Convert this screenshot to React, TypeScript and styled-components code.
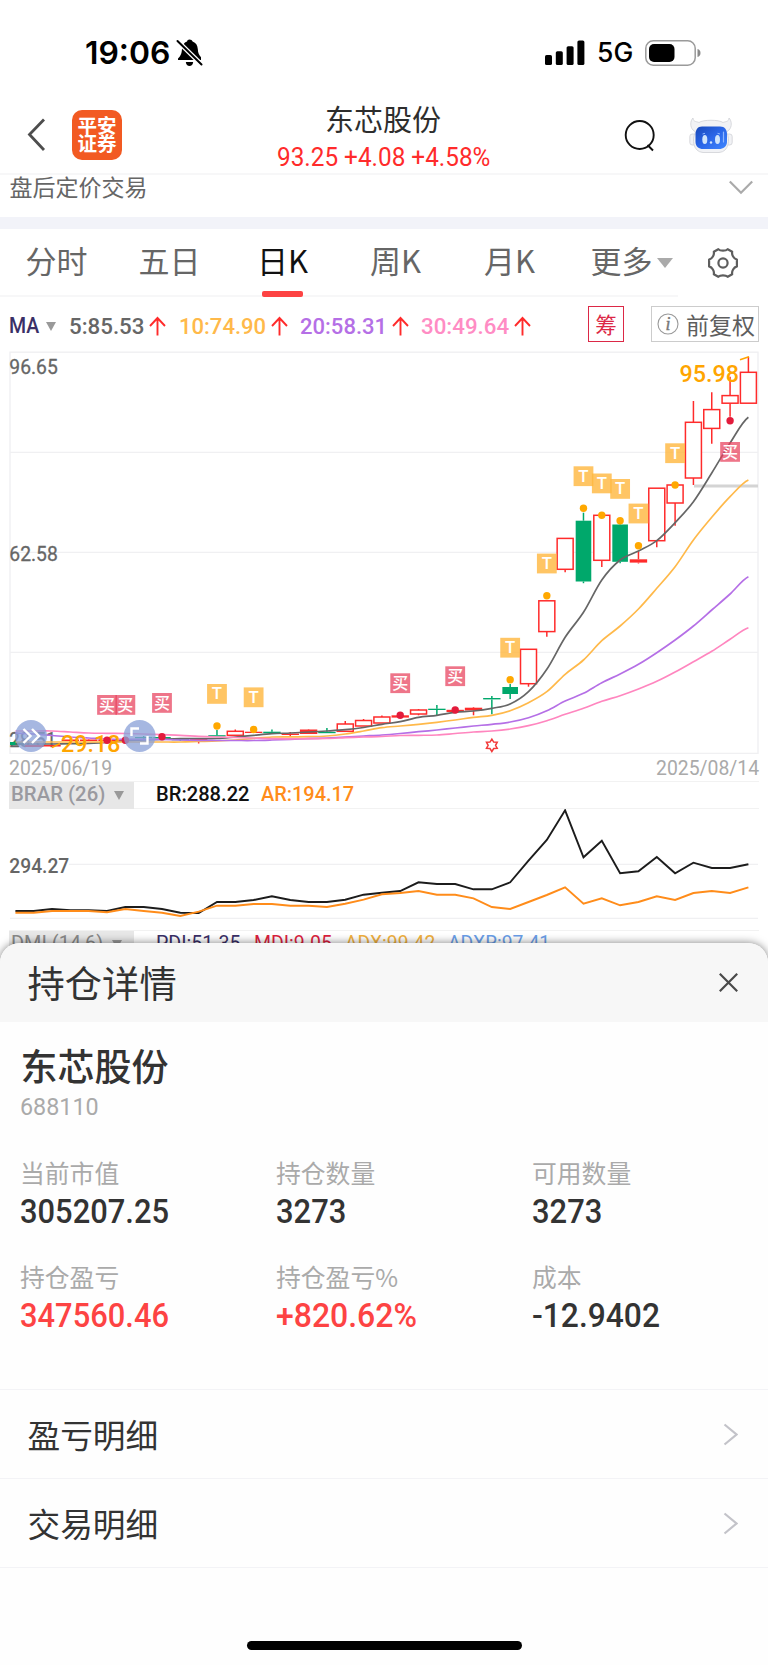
import React, { useLayoutEffect, useRef, useState } from "react";
import styled, { createGlobalStyle } from "styled-components";

const CJK = `"Noto Sans CJK SC", "Noto Sans", sans-serif`;
const DIN = `Roboto, "Noto Sans CJK SC", sans-serif`;

const Global = createGlobalStyle`
  * { box-sizing: border-box; }
  body { margin: 0; background: #fff; font-family: ${CJK}; }
  svg { display: block; flex: none; }
`;

/* ---------- narrow figures, squeezed to the width of their slot ---------- */
const FitSlot = styled.span<{ $w: number; $size: number; $weight?: number; $color?: string; $font?: string }>`
  display: block;
  flex: none;
  width: ${(p) => p.$w}px;
  font-family: ${(p) => p.$font ?? DIN};
  font-size: ${(p) => p.$size}px;
  font-weight: ${(p) => p.$weight ?? 400};
  color: ${(p) => p.$color ?? "inherit"};
  line-height: 1.2;
  white-space: nowrap;
`;
const FitText = styled.span`
  display: inline-block;
  transform-origin: 0 50%;
`;

type FitProps = { w: number; size: number; weight?: number; color?: string; font?: string; children: string };

function Fit({ w, size, weight, color, font, children }: FitProps) {
  const ref = useRef<HTMLSpanElement>(null);
  const [scale, setScale] = useState(1);
  useLayoutEffect(() => {
    if (ref.current) setScale(w / ref.current.offsetWidth);
  }, [w, children]);
  return (
    <FitSlot $w={w} $size={size} $weight={weight} $color={color} $font={font}>
      <FitText ref={ref} style={{ transform: `scaleX(${scale})` }}>{children}</FitText>
    </FitSlot>
  );
}

/* ---------- page ---------- */
const Screen = styled.div`
  width: 768px;
  height: 1665px;
  background: #fff;
  display: flex;
  flex-direction: column;
  overflow: hidden;
`;
const Quote = styled.div`
  height: 963px;
  flex: none;
  overflow: hidden;
`;

const StatusBar = styled.div`
  height: 96px;
  padding: 10px 66px 0 85px;
  display: flex;
  align-items: center;
  justify-content: space-between;
`;
const StatusGroup = styled.div`
  display: flex;
  align-items: center;
`;
const Gap = styled.span<{ $w: number }>`
  width: ${(p) => p.$w}px;
  flex: none;
`;

const Header = styled.header`
  height: 79px;
  border-bottom: 2px solid #f7f7f8;
  display: grid;
  grid-template-columns: 277px 212px 1fr;
`;
const HeaderLeft = styled.div`
  display: flex;
  align-items: flex-start;
  padding: 14px 0 0 27px;
  gap: 26px;
`;
const HeaderRight = styled.div`
  display: flex;
  align-items: flex-start;
  padding: 20px 0 0 135px;
  gap: 31px;
`;
const BackIcon = styled.svg`
  margin-top: 8px;
`;
const Logo = styled.div`
  width: 50px;
  height: 50px;
  border-radius: 10px;
  background: #f25a22;
  color: #fff;
  font-size: 19.5px;
  font-weight: 700;
  line-height: 18.5px;
  text-align: center;
  padding-top: 5.5px;
`;
const HeaderCenter = styled.div`
  display: flex;
  flex-direction: column;
  align-items: center;
`;
const StockTitle = styled.div`
  font-size: 29px;
  line-height: 44px;
  height: 47px;
  color: #2d2d2d;
`;

const AfterHours = styled.div`
  height: 42px;
  display: flex;
  align-items: flex-start;
  justify-content: space-between;
  padding: 0 15px 0 9.5px;
  font-size: 23px;
  line-height: 22px;
  color: #666;
`;
const DownIcon = styled.svg`
  margin-top: 5px;
`;
const Band = styled.div`
  height: 12px;
  background: #f2f3f9;
`;

const Tabs = styled.nav`
  height: 68px;
  display: flex;
  width: 678px;
  border-bottom: 2px solid #f7f7f8;
`;
const TabsRow = styled.div`
  display: flex;
  align-items: flex-start;
`;
const Tab = styled.div<{ $w: number; $active?: boolean; $shift?: number }>`
  width: ${(p) => p.$w}px;
  height: 68px;
  flex: none;
  display: flex;
  flex-direction: column;
  align-items: center;
  justify-content: space-between;
  padding-left: ${(p) => p.$shift ?? 0}px;
  font-size: 31px;
  line-height: 66px;
  color: ${(p) => (p.$active ? "#111" : "#666")};
`;
const TabLabel = styled.div`
  height: 62px;
  display: flex;
  align-items: center;
  gap: 4px;
  white-space: nowrap;
  svg { margin-top: 5px; }
`;
const Underline = styled.div`
  width: 41px;
  height: 6px;
  border-radius: 2px;
  background: #fd4343;
`;
const GearWrap = styled.div`
  padding: 18px 0 0 28px;
`;

const MaRow = styled.div`
  height: 54px;
  display: flex;
  align-items: center;
  padding: 0 9px;
`;
const Readouts = styled.div`
  display: flex;
  align-items: center;
  padding-top: 4px;
`;
const ChipButton = styled.div`
  width: 36px;
  height: 36px;
  border: 1.5px solid #dc2846;
  color: #dc2846;
  font-size: 21.5px;
  line-height: 34px;
  text-align: center;
`;
const AdjustButton = styled.div`
  width: 108px;
  height: 36px;
  border: 1.5px solid #ccc;
  display: flex;
  align-items: center;
  color: #5e5e5e;
  font-size: 23px;
  line-height: 34px;
  padding-left: 5px;
  gap: 7px;
  white-space: nowrap;
`;
const DateRow = styled.div`
  height: 27px;
  display: flex;
  justify-content: space-between;
  align-items: center;
  padding: 2px 9px 0;
`;
const IndicatorBar = styled.div`
  height: 28px;
  margin: 0 9px;
  border-top: 1.5px solid #f2f2f2;
  border-bottom: 1.5px solid #f2f2f2;
  display: flex;
  align-items: center;
`;
const IndicatorName = styled.div`
  width: 125px;
  height: 27px;
  flex: none;
  background: #e7e7e7;
  padding-left: 2px;
  display: flex;
  align-items: center;
  gap: 9px;
  margin-right: 22px;
`;

/* ---------- position sheet ---------- */
const Sheet = styled.section`
  position: relative;
  flex: 1;
  margin-top: -20px;
  border-radius: 20px 20px 0 0;
  background: #fefefe;
  box-shadow: 0 0 9px rgba(0, 0, 0, 0.5);
  display: flex;
  flex-direction: column;
`;
const SheetHeader = styled.div`
  height: 78.5px;
  flex: none;
  border-radius: 20px 20px 0 0;
  background: #f7f7f7;
  display: flex;
  align-items: center;
  justify-content: space-between;
  padding: 0 30px 0 27.5px;
  font-size: 37.3px;
  line-height: 76px;
  color: #333;
`;
const Holding = styled.div`
  height: 367.5px;
  padding: 18px 20px 0;
`;
const HoldingName = styled.div`
  font-size: 37px;
  font-weight: 500;
  line-height: 51px;
  height: 52px;
  padding-left: 0.5px;
  color: #333;
`;
const HoldingCode = styled.div`
  height: 64px;
`;
const Stats = styled.div`
  display: grid;
  grid-template-columns: 256px 256px 1fr;
  grid-auto-rows: 104px;
`;
const StatLabel = styled.div`
  font-size: 24.8px;
  line-height: 32px;
  color: #aaa;
  margin-bottom: 3px;
`;
const LinkRow = styled.div`
  height: 89px;
  flex: none;
  border-top: 1px solid #f3f3f6;
  display: flex;
  align-items: center;
  justify-content: space-between;
  padding: 0 30px 0 27.5px;
  font-size: 32.7px;
  line-height: 84px;
  color: #333;
`;
const SheetFoot = styled.div`
  flex: 1;
  border-top: 1px solid #f3f3f6;
  display: flex;
  justify-content: center;
  align-items: flex-end;
  padding-bottom: 15px;
`;
const HomeBar = styled.div`
  width: 275px;
  height: 9px;
  border-radius: 4.5px;
  background: #000;
`;

/* ---------- icons ---------- */
const Triangle = ({ w = 10, h = 9, color = "#999" }) => (
  <svg width={w} height={h} viewBox="0 0 10 9" preserveAspectRatio="none">
    <path d="M0 0H10L5 9Z" fill={color} />
  </svg>
);
const UpArrow = () => (
  <svg width="17" height="20" viewBox="0 0 17 20" fill="none" stroke="#ff2b2b" strokeWidth="1.9">
    <path d="M8.5 19.5V2M1 10L8.5 2L16 10" />
  </svg>
);
const BellOff = () => (
  <svg width="27" height="28" viewBox="0 0 27 28">
    <path d="M13.5 .5C15 .5 16.2 1.3 16.6 2.5C20 3.6 21.5 6.5 21.8 10C22 14 23 16 25 18.2V21H2V19.5C5 16.5 5.6 14.5 6 10C6.3 6.5 8 3.5 11 2.5C11.200 1.300 12.200 .5 13.500 .5Z" />
    <path d="M9.800 23H17.200C16.900 25.500 15.500 27 13.500 27S10.100 25.500 9.800 23Z" />
    <path d="M1 1.500L26.500 26.500" stroke="#fff" strokeWidth="4.600" />
    <path d="M1.500 2L25.500 25.500" stroke="#000" strokeWidth="2" strokeLinecap="round" />
  </svg>
);
const Signal = () => (
  <svg width="40" height="26" viewBox="0 0 40 26">
    <rect x="0" y="15" width="7" height="10" rx="1.600" />
    <rect x="10.800" y="11.200" width="7" height="13.800" rx="1.600" />
    <rect x="21.600" y="6.200" width="7" height="18.800" rx="1.600" />
    <rect x="32.400" y=".5" width="7" height="24.500" rx="1.600" />
  </svg>
);
const Battery = () => (
  <svg width="57" height="26" viewBox="0 0 57 26">
    <rect x=".8" y=".8" width="49.400" height="24.400" rx="7.500" fill="none" stroke="#9a9a9a" strokeWidth="1.500" />
    <rect x="4" y="4" width="25.500" height="18" rx="5" />
    <path d="M52.500 9C54.500 9.600 55.500 11 55.500 13S54.500 16.400 52.500 17Z" fill="#8a8a8a" />
  </svg>
);
const Robot = () => (
  <svg width="44" height="38" viewBox="0 0 44 36">
    <defs>
      <linearGradient id="visor" x1="0" y1="0" x2="1" y2="1">
        <stop offset="0" stopColor="#1848b8" />
        <stop offset=".5" stopColor="#2a66e8" />
        <stop offset="1" stopColor="#3f86ff" />
      </linearGradient>
    </defs>
    <g fill="#f1f2f5" stroke="#cfd0d6" strokeWidth=".8">
      <rect x=".8" y="17" width="6" height="11" rx="2.500" />
      <rect x="37.200" y="17" width="6" height="11" rx="2.500" />
      <path d="M4 1C1 4 1 10 4 13L6.500 15C2.500 22 4 35 14 35.500H30C40 35 41.500 22 37.500 15L40 13C43 10 43 4 40 1C40 5 36 4.500 34 5.500C30 2.500 14 2.500 10 5.500C8 4.500 4 5 4 1Z" />
    </g>
    <path d="M13 9.500H31C36 9.500 38 13 38 17.500V25C38 29.500 34 32 30 32H14C10 32 6.500 29.500 6.500 25V17.500C6.500 13 8.500 9.500 13 9.500Z" fill="url(#visor)" />
    <ellipse cx="15.800" cy="22.500" rx="2.500" ry="4.500" fill="#cfe4fb" />
    <ellipse cx="28.500" cy="22.500" rx="2.500" ry="4.500" fill="#cfe4fb" />
    <path d="M13.500 17L16 16.300M28.500 16.300L31 17" stroke="#8fb8ff" strokeWidth="1" />
    <circle cx="22" cy="25.500" r="1.200" fill="#cfe4fb" />
    <path d="M34.500 15V25" stroke="#8eb6ff" strokeWidth="1.200" strokeLinecap="round" />
  </svg>
);
const Gear = () => (
  <svg width="32" height="32" viewBox="0 0 32 32" fill="none" stroke="#5e5e5e" strokeWidth="2.200" strokeLinejoin="round">
    <path d="M11.300 2.200C13.300 4.200 18.700 4.200 20.700 2.200L25.200 4.800C24.500 7.800 26.700 11.600 29.900 12.600V19.400C26.700 20.400 24.500 24.200 25.200 27.200L20.700 29.800C18.700 27.800 13.300 27.800 11.300 29.800L6.800 27.200C7.500 24.200 5.300 20.400 2.100 19.400V12.600C5.300 11.600 7.500 7.800 6.800 4.800Z" />
    <circle cx="16" cy="16" r="4.600" />
  </svg>
);
const Info = () => (
  <svg width="22" height="22" viewBox="0 0 22 22">
    <circle cx="11" cy="11" r="10" fill="none" stroke="#999" strokeWidth="1.100" />
    <text x="11" y="17" textAnchor="middle" fontFamily="Liberation Serif, serif" fontStyle="italic" fontSize="18" fill="#777" stroke="#777" strokeWidth=".4">i</text>
  </svg>
);
const RightChevron = () => (
  <svg width="15" height="23" viewBox="0 0 15 23" fill="none" stroke="#c3c3c9" strokeWidth="2.200">
    <path d="M1.500 1.500L13.500 11.500L1.500 21.500" />
  </svg>
);

/* ---------- chart data ---------- */
const px = (i: number) => 15.4 + 18.325 * i;
type Kind = "up" | "down" | "flat";
/* index, kind, body top, body bottom, high, low */
const candles: [number, Kind, number, number, number, number][] = [
  [0, "down", 742, 745, 741, 745], [1, "flat", 745, 747, 745, 747], [2, "flat", 745, 746.5, 745, 746.5],
  [3, "flat", 739.5, 741, 739, 741], [4, "flat", 739.5, 741, 739, 741], [5, "flat", 739.5, 741, 738, 742],
  [6, "flat", 739.5, 741, 738, 742], [7, "down", 737, 738.3, 736, 739], [8, "down", 737, 738.3, 735, 739],
  [9, "down", 739, 740.3, 738, 741],
  [10, "flat", 738.3, 742, 738, 743.5], [11, "down", 735.2, 736.5, 730, 736.5], [12, "up", 731.3, 735.3, 729.5, 735.3],
  [13, "flat", 731.7, 733, 731, 733], [14, "down", 731.7, 733.2, 729.5, 733.2], [15, "flat", 733.5, 735, 732, 736.5],
  [16, "flat", 729.5, 734, 729, 734], [17, "down", 731.8, 733.2, 728, 733.2], [18, "up", 724, 731.3, 721, 731.3],
  [19, "up", 720.5, 726, 719, 726], [20, "up", 717, 723, 715.5, 723], [21, "flat", 715.3, 717.6, 714, 717.6],
  [22, "up", 710, 714, 709, 715.3], [23, "down", 708.7, 710, 705, 715], [24, "flat", 709.8, 712, 709, 712],
  [25, "flat", 707.7, 710.5, 707, 715.3], [26, "down", 698, 699.4, 696, 714.3], [27, "down", 687, 694, 684, 699],
  [28, "up", 649.3, 683.7, 649.3, 686.7], [29, "up", 600.8, 631.6, 600.8, 636.7], [30, "up", 538.4, 569.3, 538.4, 572.3],
  [31, "down", 520.7, 581.5, 512.7, 583.2], [32, "up", 515.3, 560.3, 515.3, 567], [33, "down", 524.5, 561.8, 522, 563.2],
  [34, "flat", 559.3, 562.6, 551.3, 563.5], [35, "up", 488.2, 540.7, 488.2, 547.3], [36, "up", 485, 503, 485, 525.7],
  [37, "up", 422.3, 478, 401, 485], [38, "up", 409.6, 428.4, 392.3, 443.7], [39, "up", 395.6, 403.2, 376.7, 416.7],
  [40, "up", 372.3, 403.2, 356.7, 403.2],
];
const trades: [number, "T" | "买", number][] = [
  [5, "买", 695], [6, "买", 695], [8, "买", 693], [11, "T", 684], [13, "T", 687.4], [21, "买", 673.3], [24, "买", 666.3],
  [27, "T", 637.8], [29, "T", 553.6], [31, "T", 466.3], [32, "T", 473.5], [33, "T", 479], [34, "T", 503.6], [36, "T", 443.3], [39, "买", 442],
];
const sellDots: [number, number][] = [
  [11, 726], [13, 729.5], [27, 679.7], [29, 595.7], [31, 508.3], [32, 515.3], [33, 520.7], [34, 545.7], [36, 485],
];
const buyDots: [number, number][] = [[5, 740.3], [6, 740.3], [8, 736.7], [21, 715.3], [24, 710], [39, 420.7]];
const maLines: { color: string; pts: number[] }[] = [
  { color: "#666", pts: [744, 744, 744, 743.7, 743.3, 742.5, 741, 740, 739.3, 738.7, 738.5, 738.5, 737, 735.3, 733.7, 733, 732, 731, 729.7, 727.5, 724.3, 721.7, 717.3, 715.3, 712.3, 711, 708.3, 704, 691.7, 669.3, 637.3, 612.3, 580, 560, 551, 540.7, 522.7, 501.7, 473, 443, 417.3] },
  { color: "#ffb94a", pts: [742, 742, 742, 742, 742, 742, 742, 742, 742, 742, 741.5, 741, 740, 738.5, 737, 736.8, 736.7, 736, 734, 731, 727.7, 726, 724.3, 722.3, 720, 717.3, 715.3, 710.7, 702.7, 691.7, 674.3, 660, 640.7, 626, 609, 588.3, 566.7, 540, 517.3, 496.7, 480] },
  { color: "#b56fe6", pts: [733, 734, 735.5, 737, 738, 739, 739.3, 739.3, 739.5, 740, 740.3, 740.5, 740.5, 740.5, 740, 739.3, 738.7, 738, 737, 736, 735, 733.5, 731.7, 730, 728, 726, 724.3, 722, 717.7, 710.7, 701, 693.3, 682.7, 674, 664.3, 652.7, 640, 626, 610, 594, 576.7] },
  { color: "#ff86bf", pts: [731, 731, 731, 732, 733, 733.3, 733.5, 734, 734.7, 735.3, 736.3, 737, 737.5, 738, 738.7, 738.8, 738.7, 738.5, 737.7, 737, 736.5, 735.5, 735.3, 735, 733.5, 732, 731, 729, 725.7, 720.7, 714.3, 708.3, 701.3, 695.7, 689, 681.3, 672, 661.7, 651.3, 639.3, 627.7] },
];
const br = [911, 911, 909, 910.3, 910.3, 911, 907, 907, 909, 912.7, 913, 902, 902, 900, 896.3, 900, 902, 902, 899.7, 894.7, 892.8, 891, 882.3, 884, 884, 889.3, 889.3, 882.3, 860.7, 840, 810.3, 857.3, 840.7, 873.3, 871.3, 857, 873.3, 862.7, 868, 868, 864.3];
const ar = [912.7, 912.7, 911, 911, 911, 912.3, 909, 911, 912.7, 916, 911.7, 905.7, 905.7, 904, 904, 905.7, 905.7, 907, 903.7, 899.7, 894.3, 893, 891, 894.7, 894.7, 898.3, 907, 909, 902, 895, 887.3, 903.7, 898.3, 905.3, 902, 896.3, 900, 893, 891, 893, 887.3];

const polyline = (v: number[]) => v.map((y, i) => `${px(i).toFixed(1)},${y}`).join(" ");
const smooth = (v: number[]) =>
  v.reduce((d, y, i) => {
    if (i === 0) return `M${px(0)} ${y}`;
    const slope = (k: number) => (v[Math.min(k + 1, v.length - 1)] - v[Math.max(k - 1, 0)]) / 6;
    return `${d}C${px(i - 1) + 6.1} ${v[i - 1] + slope(i - 1)} ${px(i) - 6.1} ${y - slope(i)} ${px(i)} ${y}`;
  }, "");

function Candle({ i, kind, top, bottom, high, low }: { i: number; kind: Kind; top: number; bottom: number; high: number; low: number }) {
  const x = px(i);
  const color = kind === "down" ? "#00a86b" : "#ff2b2b";
  const w = kind === "up" ? 16 : kind === "down" && bottom - top > 4 ? 15.6 : 17.4;
  const left = Math.max(x - w / 2, 10);
  const width = x + w / 2 - left;
  return (
    <g stroke={color} strokeWidth="1.5">
      {high < top && <path d={`M${x} ${high}V${top}`} />}
      {low > bottom && <path d={`M${x} ${bottom}V${low}`} />}
      {kind === "up" ? (
        <rect x={left} y={top} width={width} height={bottom - top} fill="#fff" />
      ) : (
        <rect x={left} y={top} width={width} height={bottom - top} fill={color} stroke="none" />
      )}
    </g>
  );
}

const starPoints = Array.from({ length: 12 }, (_, k) => {
  const a = (Math.PI / 6) * k - Math.PI / 2;
  const r = k % 2 ? 3.7 : 6.2;
  return `${(px(26) + r * Math.cos(a)).toFixed(2)},${(745.3 + r * Math.sin(a)).toFixed(2)}`;
}).join(" ");

function KLineChart() {
  return (
    <svg width="768" height="403" viewBox="0 351 768 403" fontFamily="Roboto, sans-serif">
      <g stroke="#f0f0f2" strokeWidth="1.4" fill="none">
        <rect x="10" y="352.2" width="748" height="401.200" />
        <path d="M10 452.400H758M10 552.400H758M10 652.400H758" />
      </g>
      <g fontSize="20.500" fill="#666" stroke="#666" strokeWidth=".3">
        <text x="9.300" y="374.300" textLength="48.500" lengthAdjust="spacingAndGlyphs">96.65</text>
        <text x="9.300" y="560.800" textLength="48.500" lengthAdjust="spacingAndGlyphs">62.58</text>
        <text x="9.300" y="747" textLength="47" lengthAdjust="spacingAndGlyphs">28.51</text>
      </g>
      {candles.map(([i, kind, top, bottom, high, low]) => (
        <Candle key={i} i={i} kind={kind} top={top} bottom={bottom} high={high} low={low} />
      ))}
      <path d="M694 486H758" stroke="#d4d4d4" strokeWidth="3.200" />
      {maLines.map((m) => (
        <path key={m.color} d={smooth(m.pts)} fill="none" stroke={m.color} strokeWidth="1.700" />
      ))}
      <path d="M740 359.700L749 356.700M52 747.500L60 743.500" stroke="#ffa500" strokeWidth="1.600" />
      <g fontSize="24.500" fill="#ffa500" fontWeight="500">
        <text x="679.500" y="382" textLength="59.500" lengthAdjust="spacingAndGlyphs">95.98</text>
        <text x="61" y="752" textLength="59.500" lengthAdjust="spacingAndGlyphs">29.18</text>
      </g>
      {sellDots.map(([i, y]) => <circle key={i} cx={px(i)} cy={y} r="3.700" fill="#ffa800" />)}
      {buyDots.map(([i, y]) => <circle key={i} cx={px(i)} cy={y} r="3.700" fill="#e31b3c" />)}
      {trades.map(([i, side, y]) => (
        <g key={i}>
          <rect x={px(i) - 9.900} y={y} width="19.800" height="19.800" fill={side === "T" ? "#ffb73d" : "#e8405c"} fillOpacity={side === "T" ? 0.8 : 0.72} />
          {side === "T" ? (
            <text x={px(i)} y={y + 15.200} textAnchor="middle" fontSize="16.800" fontWeight="500" fill="#fff">T</text>
          ) : (
            <text x={px(i)} y={y + 15.800} textAnchor="middle" fontSize="16" fontWeight="500" fontFamily="Noto Sans CJK SC, sans-serif" fill="#fff">买</text>
          )}
        </g>
      ))}
      <polygon points={starPoints} fill="none" stroke="#f23a3a" strokeWidth="1.500" />
      <g fill="#8aa0d8" fillOpacity=".76">
        <circle cx="31" cy="736" r="16" />
        <circle cx="139.600" cy="736" r="16" />
      </g>
      <g fill="none" stroke="#fff" strokeWidth="2.400">
        <path d="M23.500 729L30.500 736L23.500 743M32 729L39 736L32 743" />
        <path d="M131.500 736V728.500H139M140 743.500H147.500V736" />
      </g>
    </svg>
  );
}

function BrarChart() {
  return (
    <svg width="768" height="121" viewBox="0 809 768 121" fontFamily="Roboto, sans-serif">
      <path d="M10 864.400H758M10 918.400H758" stroke="#f0f0f2" strokeWidth="1.400" />
      <rect x="8" y="855" width="61" height="20" fill="#fff" />
      <text x="9.300" y="873.200" fontSize="21" fontWeight="500" fill="#666" textLength="60" lengthAdjust="spacingAndGlyphs">294.27</text>
      <polyline points={polyline(br)} fill="none" stroke="#1c1c1c" strokeWidth="1.900" />
      <polyline points={polyline(ar)} fill="none" stroke="#ff8c1a" strokeWidth="1.900" />
    </svg>
  );
}

const averages = [
  { text: "5:85.53", w: 75, color: "#666", after: 13 },
  { text: "10:74.90", w: 87, color: "#ffb94a", after: 12 },
  { text: "20:58.31", w: 87, color: "#b56fe6", after: 12 },
  { text: "30:49.64", w: 88, color: "#ff8cc4", after: 57 },
];
const stats = [
  { label: "当前市值", value: "305207.25", w: 149 },
  { label: "持仓数量", value: "3273", w: 70 },
  { label: "可用数量", value: "3273", w: 70 },
  { label: "持仓盈亏", value: "347560.46", w: 149, red: true },
  { label: "持仓盈亏%", value: "+820.62%", w: 141, red: true },
  { label: "成本", value: "-12.9402", w: 128 },
];

export default function App() {
  return (
    <Screen>
      <Global />
      <Quote>
        <StatusBar>
          <StatusGroup>
            <Fit w={85} size={31.500} weight={600} color="#000" font="Inter, sans-serif">19:06</Fit>
            <Gap $w={6} />
            <BellOff />
          </StatusGroup>
          <StatusGroup>
            <Signal />
            <Gap $w={12} />
            <Fit w={36} size={26.500} weight={500} color="#000" font="Inter, sans-serif">5G</Fit>
            <Gap $w={12} />
            <Battery />
          </StatusGroup>
        </StatusBar>

        <Header>
          <HeaderLeft>
            <BackIcon width="19" height="34" viewBox="0 0 19 34" fill="none" stroke="#4d4d4d" strokeWidth="2.800">
              <path d="M17 1.500L2.500 16.500L17 32" />
            </BackIcon>
            <Logo>平安<br />证券</Logo>
          </HeaderLeft>
          <HeaderCenter>
            <StockTitle>东芯股份</StockTitle>
            <Fit w={213} size={25} color="#ff2b2b">93.25 +4.08 +4.58%</Fit>
          </HeaderCenter>
          <HeaderRight>
            <svg width="34" height="36" viewBox="0 0 34 36" fill="none" stroke="#111" strokeWidth="1.900">
              <circle cx="15.700" cy="19" r="14" />
              <path d="M23.500 29L29 34.500" />
            </svg>
            <Robot />
          </HeaderRight>
        </Header>

        <AfterHours>
          盘后定价交易
          <DownIcon width="24" height="15" viewBox="0 0 24 15" fill="none" stroke="#aaa" strokeWidth="2.200">
            <path d="M.8 1.500L12 12.700L23.200 1.500" />
          </DownIcon>
        </AfterHours>
        <Band />

        <Tabs>
          <TabsRow>
            <Tab $w={113}><TabLabel>分时</TabLabel></Tab>
            <Tab $w={113}><TabLabel>五日</TabLabel></Tab>
            <Tab $w={113} $active><TabLabel>日K</TabLabel><Underline /></Tab>
            <Tab $w={113}><TabLabel>周K</TabLabel></Tab>
            <Tab $w={115}><TabLabel>月K</TabLabel></Tab>
            <Tab $w={112} $shift={17}><TabLabel>更多<Triangle w={16} h={10} color="#aaa" /></TabLabel></Tab>
            <GearWrap><Gear /></GearWrap>
          </TabsRow>
        </Tabs>

        <MaRow>
          <Readouts>
            <Fit w={30} size={21.500} weight={500} color="#3a2f66">MA</Fit>
            <Gap $w={7} />
            <Triangle />
            <Gap $w={13} />
            {averages.map((m) => (
              <React.Fragment key={m.text}>
                <Fit w={m.w} size={22.300} weight={500} color={m.color}>{m.text}</Fit>
                <Gap $w={5} />
                <UpArrow />
                <Gap $w={m.after} />
              </React.Fragment>
            ))}
          </Readouts>
          <ChipButton>筹</ChipButton>
          <Gap $w={27} />
          <AdjustButton><Info />前复权</AdjustButton>
        </MaRow>

        <KLineChart />
        <DateRow>
          <Fit w={103} size={20.500} color="#aaa">2025/06/19</Fit>
          <Fit w={103} size={20.500} color="#aaa">2025/08/14</Fit>
        </DateRow>
        <IndicatorBar>
          <IndicatorName><Fit w={94} size={21} weight={500} color="#9a9aa0">BRAR (26)</Fit><Triangle /></IndicatorName>
          <Fit w={94} size={21} weight={500} color="#111">BR:288.22</Fit>
          <Gap $w={11} />
          <Fit w={93} size={21} weight={500} color="#ff8c1a">AR:194.17</Fit>
        </IndicatorBar>
        <BrarChart />
        <IndicatorBar>
          <IndicatorName><Fit w={92} size={21} color="#888">DMI (14,6)</Fit><Triangle /></IndicatorName>
          <Fit w={85} size={21} color="#3a2f66">PDI:51.35</Fit>
          <Gap $w={13} />
          <Fit w={78} size={21} color="#dc1f3f">MDI:9.05</Fit>
          <Gap $w={13} />
          <Fit w={90} size={21} color="#f0b040">ADX:99.42</Fit>
          <Gap $w={13} />
          <Fit w={102} size={21} color="#6a9ee8">ADXR:97.41</Fit>
        </IndicatorBar>
      </Quote>

      <Sheet>
        <SheetHeader>
          持仓详情
          <svg width="19" height="19" viewBox="0 0 19 19" stroke="#4a4a4a" strokeWidth="2.200">
            <path d="M.8 .8L18.200 18.200M18.200 .8L.8 18.200" />
          </svg>
        </SheetHeader>
        <Holding>
          <HoldingName>东芯股份</HoldingName>
          <HoldingCode><Fit w={79} size={24.500} color="#aaa">688110</Fit></HoldingCode>
          <Stats>
            {stats.map((s) => (
              <div key={s.label}>
                <StatLabel>{s.label}</StatLabel>
                <Fit w={s.w} size={34} weight={500} color={s.red ? "#fd4343" : "#333"}>{s.value}</Fit>
              </div>
            ))}
          </Stats>
        </Holding>
        <LinkRow>盈亏明细<RightChevron /></LinkRow>
        <LinkRow>交易明细<RightChevron /></LinkRow>
        <SheetFoot><HomeBar /></SheetFoot>
      </Sheet>
    </Screen>
  );
}
